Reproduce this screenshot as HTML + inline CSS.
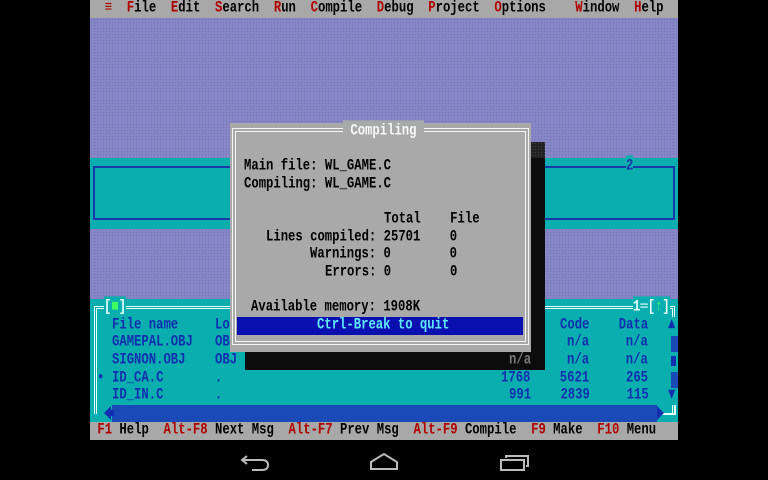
<!DOCTYPE html>
<html><head><meta charset="utf-8"><style>
*{margin:0;padding:0;box-sizing:border-box}
body{width:768px;height:480px;background:#000;position:relative;overflow:hidden;font-family:"Liberation Mono",monospace}
.a{position:absolute}
.t{position:absolute;white-space:pre;font-size:12.25px;font-weight:bold;height:17.6px;line-height:17.6px;transform:scaleY(1.3);font-family:"Liberation Mono","DejaVu Sans Mono",monospace}
.r{color:#b00000}
.bl{color:#1030b0}
</style></head><body>
<div class="a" style="left:90px;top:0;width:588px;height:440px;background:#8686c6;background-image:radial-gradient(#7474b8 30%,transparent 31%);background-size:3px 3px"></div>
<div class="a" style="left:90px;top:0;width:588px;height:17.6px;background:#a8a8a8"></div>
<div class="t" style="left:90px;top:0;color:#000">  <span class="r">≡</span>  <span class="r">F</span>ile  <span class="r">E</span>dit  <span class="r">S</span>earch  <span class="r">R</span>un  <span class="r">C</span>ompile  <span class="r">D</span>ebug  <span class="r">P</span>roject  <span class="r">O</span>ptions    <span class="r">W</span>indow  <span class="r">H</span>elp</div>

<div class="a" style="left:90px;top:158.4px;width:588px;height:70.4px;background:#0aaeae"></div>
<div class="a" style="left:93px;top:166px;width:582px;height:54px;border:2px solid #1a3aa8"></div>
<div class="t" style="left:626px;top:158.4px;color:#1a3aa8;background:#0aaeae">2</div>

<div class="a" style="left:90px;top:299.2px;width:588px;height:123.2px;background:#0aaeae"></div>
<div class="a" style="left:94px;top:306px;width:581px;height:108px;border:3px double #e8ffff;border-bottom:none"></div>
<div class="t" style="left:104px;top:299.2px;color:#e8ffff;background:#0aaeae">[<span style="color:#40ff60">■</span>]</div>
<div class="t" style="left:633px;top:299.2px;color:#e8ffff;background:#0aaeae">1═[<span style="color:#40ff60">↑</span>]</div>
<div class="t bl" style="left:112px;top:316.8px">File name</div>
<div class="t bl" style="left:215px;top:316.8px">Lo</div>
<div class="t bl" style="left:560px;top:316.8px">Code    Data</div>
<div class="t bl" style="left:112px;top:334.4px">GAMEPAL.OBJ</div>
<div class="t bl" style="left:215px;top:334.4px">OBJ</div>
<div class="t bl" style="left:567px;top:334.4px">n/a     n/a</div>
<div class="t bl" style="left:112px;top:352px">SIGNON.OBJ</div>
<div class="t bl" style="left:215px;top:352px">OBJ</div>
<div class="t bl" style="left:567px;top:352px">n/a     n/a</div>
<div class="t bl" style="left:97px;top:369.6px">•</div>
<div class="t bl" style="left:112px;top:369.6px">ID_CA.C       .</div>
<div class="t bl" style="left:501px;top:369.6px">1768    5621     265</div>
<div class="t bl" style="left:112px;top:387.2px">ID_IN.C       .</div>
<div class="t bl" style="left:509px;top:387.2px">991    2839     115</div>
<div class="a" style="left:669px;top:316.8px;width:9px;height:88px;background:#0aaeae"></div>
<div class="t bl" style="left:668px;top:316.8px">▲</div>
<div class="a" style="left:671px;top:336px;width:7px;height:16px;background:#1a4ab8"></div>
<div class="a" style="left:671px;top:356px;width:5px;height:10px;background:#1030b0"></div>
<div class="a" style="left:671px;top:372px;width:7px;height:16px;background:#1a4ab8"></div>
<div class="t bl" style="left:668px;top:387.2px">▼</div>
<div class="a" style="left:660px;top:404.8px;width:16px;height:10px;border-right:2px solid #e8ffff;border-bottom:2px solid #e8ffff;"></div>
<div class="a" style="left:112px;top:405px;width:545px;height:17px;background:#1a4ab8"></div>
<div class="a" style="left:104px;top:406px;width:0;height:0;border-top:7px solid transparent;border-bottom:7px solid transparent;border-right:7px solid #1030b0"></div>
<div class="a" style="left:110px;top:410px;width:4px;height:6px;background:#1030b0"></div>
<div class="a" style="left:657px;top:406px;width:0;height:0;border-top:7px solid transparent;border-bottom:7px solid transparent;border-left:7px solid #1030b0"></div>

<div class="a" style="left:531px;top:142px;width:14px;height:228px;background:#0c0c0c"></div>
<div class="a" style="left:531px;top:142px;width:14px;height:16px;background:#222;background-image:radial-gradient(#444 30%,transparent 31%);background-size:3px 3px"></div>
<div class="a" style="left:245px;top:352px;width:300px;height:18px;background:#0c0c0c"></div>
<div class="t" style="left:509px;top:352px;color:#777">n/a</div>
<div class="a" style="left:230px;top:123.2px;width:301px;height:228.8px;background:#a9a9a9"></div>
<div class="a" style="left:232px;top:128px;width:297px;height:217px;border:4px double #f4f4f4"></div>
<div class="t" style="left:343px;top:123.2px;color:#f8f8f8;background:#a9a9a9"> Compiling </div>
<div class="t" style="left:244px;top:158.4px;color:#000">Main file: WL_GAME.C</div>
<div class="t" style="left:244px;top:176px;color:#000">Compiling: WL_GAME.C</div>
<div class="t" style="left:384px;top:211.2px;color:#000">Total    File</div>
<div class="t" style="left:266px;top:228.8px;color:#000">Lines compiled: 25701    0</div>
<div class="t" style="left:310px;top:246.4px;color:#000">Warnings: 0        0</div>
<div class="t" style="left:325px;top:264px;color:#000">Errors: 0        0</div>
<div class="t" style="left:251px;top:299.2px;color:#000">Available memory: 1908K</div>
<div class="a" style="left:237px;top:317px;width:286px;height:18px;background:#0a10b0"></div>
<div class="t" style="left:317px;top:316.8px;color:#60e8ff">Ctrl-Break to quit</div>

<div class="a" style="left:90px;top:422.4px;width:588px;height:17.6px;background:#a8a8a8"></div>
<div class="t" style="left:90px;top:422.4px;color:#000"> <span class="r">F1</span> Help  <span class="r">Alt-F8</span> Next Msg  <span class="r">Alt-F7</span> Prev Msg  <span class="r">Alt-F9</span> Compile  <span class="r">F9</span> Make  <span class="r">F10</span> Menu</div>

<svg class="a" style="left:0;top:440px" width="768" height="40">
<g fill="none" stroke="#bbb" stroke-width="2">
<path d="M247 16 L242 20 L247 24 M242 20 H262 Q268 20 268 25 Q268 30 262 30 H252"/>
<path d="M371 22 L384 14 L397 22 V29 H371 Z"/>
<rect x="501" y="20" width="23" height="10"/>
<path d="M506 18 V16 H528 V26 H526"/>
</g>
</svg>
</body></html>
